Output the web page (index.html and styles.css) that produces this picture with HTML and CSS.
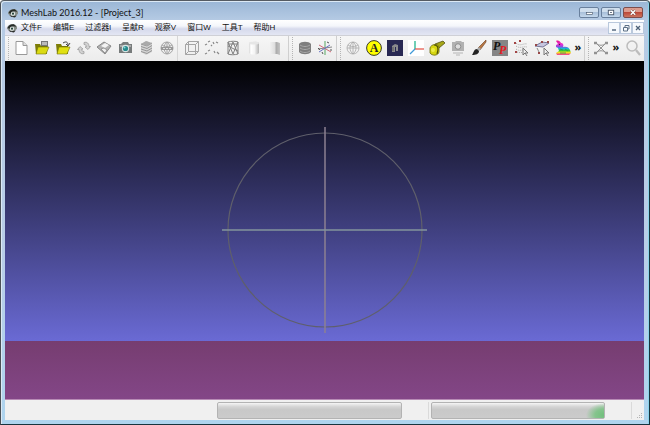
FILE: index.html
```html
<!DOCTYPE html>
<html lang="zh-CN">
<head>
<meta charset="utf-8">
<title>MeshLab 2016.12 - [Project_3]</title>
<link rel="stylesheet" href="styles.css">
</head>
<body>
<svg class="defs" aria-hidden="true">
  <defs>
    <linearGradient id="cylL"><stop offset="0" stop-color="#d8d8d8"/><stop offset=".2" stop-color="#fff"/><stop offset=".55" stop-color="#f4f4f4"/><stop offset="1" stop-color="#b4b4b4"/></linearGradient>
    <linearGradient id="cylR"><stop offset="0" stop-color="#f0f0f0"/><stop offset=".5" stop-color="#ddd"/><stop offset=".6" stop-color="#aaa"/><stop offset="1" stop-color="#c4c4c4"/></linearGradient>
    <linearGradient id="rainbow" x1="0" y1="0" x2="0" y2="1"><stop offset="0" stop-color="#e61c8c"/><stop offset=".25" stop-color="#f02ad0"/><stop offset=".42" stop-color="#8a50e2"/><stop offset=".55" stop-color="#18b6d8"/><stop offset=".7" stop-color="#35c92b"/><stop offset=".82" stop-color="#f5e21a"/><stop offset="1" stop-color="#f0309a"/></linearGradient>
    <symbol id="logo" viewBox="0 0 16 16"><path d="M0 9C0 4 5 1 10 2c4 0 7 4 6 7l-4 4-7 1z" fill="#858b86"/><path d="M1 8c1-4 6-7 10-6l4 4-5-1-6 4z" fill="#252a27"/><circle cx="8" cy="9" r="3.500" fill="#dfe6e2"/><circle cx="8" cy="9" r="1.700" fill="#27423b"/><path d="M2 11l5 2 7-1-3 3-6-1z" fill="#2a2d2a"/></symbol>
    <symbol id="globe" viewBox="0 0 16 16"><circle cx="8" cy="8" r="6"/><path d="M2 8h12M8 2v12M8 2C4 5 4 11 8 14M8 2c4 3 4 9 0 12M3 5c3 2 7 2 10 0"/></symbol>
    <symbol id="stack" viewBox="0 0 16 16"><path d="M3 12l5 3 6-3V4L9 1 3 4z" fill="#d4d4d4"/><path d="M3 4l6 2 5-3M3 6.500l6 2 5-3M3 9l6 2 5-3M3 11.500l6 2 5-3" fill="none" stroke="#959595"/><path d="M3 4l5-3 6 2-5 3z" fill="#aaa"/></symbol>
  </defs>
</svg>
<div class="window">
  <header class="titlebar">
    <svg class="logo"><use href="#logo"/></svg>
    <h1 class="title">MeshLab 2016.12 - [Project_3]</h1>
    <div class="window-buttons">
      <button class="wbtn" aria-label="最小化"><svg viewBox="0 0 20 10"><rect x="7" y="5" width="7" height="2" fill="#fff" stroke="#485669" stroke-width=".7"/></svg></button>
      <button class="wbtn" aria-label="最大化"><svg viewBox="0 0 20 10"><rect x="7" y="2.500" width="6" height="5" fill="#fff" stroke="#485669"/><path d="M9 5h2" stroke="#485669"/></svg></button>
      <button class="wbtn wbtn-close" aria-label="关闭"><svg viewBox="0 0 20 10"><path d="M7.500 2.500l5 5m0-5l-5 5" stroke="#6d3f38" stroke-width="2.600"/><path d="M7.500 2.500l5 5m0-5l-5 5" stroke="#fff" stroke-width="1.600"/></svg></button>
    </div>
  </header>

  <nav class="menubar">
    <svg class="logo"><use href="#logo"/></svg>
    <div class="menus">
      <button>文件F</button><button>编辑E</button><button>过滤器l</button><button>呈献R</button><button>观察V</button><button>窗口W</button><button>工具T</button><button>帮助H</button>
    </div>
    <div class="mdi-buttons">
      <button aria-label="最小化子窗口"><svg viewBox="0 0 10 10"><path d="M3 7h4" stroke="#4d6178" stroke-width="1.400"/></svg></button>
      <button aria-label="还原子窗口"><svg viewBox="0 0 10 10"><path d="M4 4V2.500h4V6H6.500M2.500 4.500h4v3.500h-4z" fill="none" stroke="#5d7086"/></svg></button>
      <button aria-label="关闭子窗口"><svg viewBox="0 0 10 10"><path d="M3 3l4 4m0-4L3 7" stroke="#4d6178" stroke-width="1.300"/></svg></button>
    </div>
  </nav>

  <div class="toolbars">
    <div class="toolbar main-bar">
      <div class="icons eight">
        <button aria-label="新建"><svg viewBox="0 0 16 16"><path d="M3 1.500h7l4 4v9H3z" fill="#fff" stroke="#999"/><path d="M10 1.500v4h4" fill="#ddd" stroke="#999"/></svg></button>
        <button aria-label="打开工程"><svg viewBox="0 0 16 16"><path d="M7 1h7v8H7z" fill="#777"/><path d="M8 2h5v3H8z" fill="#bbb"/><path d="M1 4h5l1 2h6v8H2z" fill="#7d7d06"/><path d="M4 7h11l-3 7H2z" fill="#dada12" stroke="#74740a" stroke-width=".6"/></svg></button>
        <button aria-label="导入网格"><svg viewBox="0 0 16 16"><path d="M1 4h5l1 2h6v8H2z" fill="#7d7d06"/><path d="M4 7h11l-3 7H2z" fill="#e0e012" stroke="#74740a" stroke-width=".6"/><path d="M8 3c3-2 5-1 5 2M11 4l2 2 2-3" fill="none" stroke="#444"/></svg></button>
        <button aria-label="重新载入"><svg viewBox="0 0 16 16"><path d="M8 2.500c3-1 5 1 5 4l1.500 0-2.500 3-3-2.500 1.500-.5c0-1-1-2-2.500-2zM8 13.500c-3 1-5-1-5-4l-1.500 0 2.500-3 3 2.500-1.500.5c0 1 1 2 2.500 2z" fill="#d2d2d2" stroke="#9c9c9c" stroke-width=".8"/></svg></button>
        <button aria-label="导出网格"><svg viewBox="0 0 16 16"><path d="M1 7l7-5 7 4-6 8z" fill="#b1b1b1" stroke="#888"/><path d="M5 6l4-3 4 2-4 3z" fill="#f3f3f3"/><path d="M5 9l3-1 3 2-2 3z" fill="#eee" stroke="#777" stroke-width=".6"/></svg></button>
        <button aria-label="快照"><svg viewBox="0 0 16 16"><path d="M2 4h2l2-2h5l1 2h3v9H2z" fill="#777b7b"/><path d="M3 5h11v2H3z" fill="#aaa"/><circle cx="8.500" cy="8.500" r="3.700" fill="#d8e4e4"/><circle cx="8.500" cy="8.500" r="2.600" fill="#268b8e"/><circle cx="7.500" cy="7.500" r="1" fill="#8ed7d7"/></svg></button>
        <button aria-label="图层"><svg><use href="#stack"/></svg></button>
        <button aria-label="光栅"><svg viewBox="0 0 16 16"><g fill="#eee" stroke="#a5a5a5"><use href="#globe"/></g><path d="M2 7h12v3H2z" fill="#999"/><path d="M4 8.500h8" stroke="#ddd" stroke-dasharray="2 1"/></svg></button>
      </div>
      <div class="icons five">
        <button aria-label="包围盒"><svg viewBox="0 0 16 16"><path d="M1.500 4.500h10v10h-10zM4.500 1.500h10v10h-10zM1.500 4.500l3-3m7 3l3-3m-3 13l3-3m-13 3l3-3" fill="none" stroke="#a5a5a5"/></svg></button>
        <button aria-label="点"><svg viewBox="0 0 16 16"><path d="M1 5l2-1m1-2l2-1m3 1l1 2m2-2l2 1M1 14l2-1m1-2l2-1m4 1l1 2m2-1l2 2M7 5l1 1" stroke="#888" stroke-width="1.200"/></svg></button>
        <button aria-label="线框"><svg viewBox="0 0 16 16"><path d="M3 2c3-1 8-1 10 0v12c-3 1-8 1-10 0zM3 2l5 12 5-12M3 14l5-12 5 12M3 6l10 5M3 4h10" fill="none" stroke="#808080"/></svg></button>
        <button aria-label="平滑着色"><svg viewBox="0 0 16 16"><path d="M3 3c2-2 8-2 10 0v10c-2 2-8 2-10 0z" fill="url(#cylL)"/><ellipse cx="8" cy="3" rx="5" ry="1.500" fill="#e6e6e6"/></svg></button>
        <button aria-label="平面着色"><svg viewBox="0 0 16 16"><path d="M3 2h7l3 1v12l-3-1H3z" fill="url(#cylR)"/></svg></button>
      </div>
    </div>
    <div class="toolbar view-bar">
      <div class="icons two">
        <button aria-label="图层对话框"><svg viewBox="0 0 16 16"><path d="M2 4c2-3 10-3 12 0v8c-2 3-10 3-12 0z" fill="#7e7e7e"/><path d="M3 5c3 2 7 2 10 0M3 8c3 2 7 2 10 0M3 11c3 2 7 2 10 0" fill="none" stroke="#a9a9a9"/></svg></button>
        <button aria-label="坐标轴"><svg viewBox="0 0 16 16" fill="none"><path d="M8 1v14" stroke="#59a765"/><path d="M1 9l14-2" stroke="#888"/><path d="M2 5l12 7" stroke="#d16b78"/><path d="M2 12l11-7" stroke="#6773c4"/><path d="M10 2l2 1m2 6v2M1 8l2 2M5 12l1 2" stroke="#555"/></svg></button>
      </div>
    </div>
    <div class="toolbar edit-bar">
      <div class="icons eleven">
        <button aria-label="轨迹球"><svg fill="none" stroke="#a8a8a8" stroke-width=".8"><use href="#globe"/></svg></button>
        <button aria-label="标注"><svg viewBox="0 0 16 16"><circle cx="8" cy="8" r="7.400" fill="#ffff00" stroke="#222" stroke-width=".9"/><text class="glyph-a" x="8" y="12" text-anchor="middle">A</text></svg></button>
        <button aria-label="对齐"><svg viewBox="0 0 16 16"><path d="M0 0h16v16H0z" fill="#292953"/><path d="M5 6l3-2 3 1v6H9V7H8v5H5z" fill="#8b8b8d"/><path d="M6 7v4" stroke="#555"/></svg></button>
        <button aria-label="参考坐标"><svg viewBox="0 0 16 16"><path d="M0 0h16v16H0z" fill="#fff"/><path d="M7 9V1" stroke="#23b58e" stroke-width="1.300"/><path d="M7 9h9" stroke="#e65c50" stroke-width="1.300"/><path d="M7 9l-5 5" stroke="#3f9ad8" stroke-width="1.300"/></svg></button>
        <button aria-label="测量"><svg viewBox="0 0 16 16"><path d="M6 4l8-3 2 2-6 5z" fill="#a7a719" stroke="#45450b" stroke-width=".7"/><path d="M1 8c1-4 8-5 9-1v5c-1 4-7 4-9 1z" fill="#d6d611" stroke="#67670a" stroke-width=".8"/><path d="M5 5c4 0 5 3 3 9" stroke="#4d4d07" stroke-width="1.200" fill="none"/><circle cx="4" cy="10" r="2" fill="#ecec49"/></svg></button>
        <button aria-label="光栅快照"><svg viewBox="0 0 16 16"><path d="M2 2h3l1-1h5l1 1h2v9H2z" fill="#b1b1b1"/><circle cx="8" cy="6.500" r="2.800" fill="#ddd" stroke="#8e8e8e"/><path d="M3 13h10M6 15h4" stroke="#b5b5b5"/></svg></button>
        <button aria-label="画笔"><svg viewBox="0 0 16 16"><path d="M15 0L7 8l2 2 6-8z" fill="#b97843" stroke="#693e20" stroke-width=".6"/><path d="M8 7L6 9l2 2 2-2z" fill="#aaa"/><path d="M6 9c-3 0-3 3-5 6 4 0 7-1 7-4z" fill="#222"/></svg></button>
        <button aria-label="选取点"><svg viewBox="0 0 16 16"><path d="M0 0h16v16H0z" fill="#858585"/><text class="glyph-p" x="1" y="10">P</text><text class="glyph-p red" x="7" y="14">P</text></svg></button>
        <button aria-label="选择顶点"><svg viewBox="0 0 16 16" fill="none"><path d="M3 3c4 4 7 0 11 1M3 6c4 3 7 0 11 1M3 9c4 3 7 0 9 1M4 12c3 1 5 0 7 1" stroke="#aaa" stroke-dasharray="1 1"/><path d="M1 3h2M6 1h2M2 12h2" stroke="#a34444" stroke-width="2"/><path d="M10 8v7l2-2 2 3M10 8l5 5h-3" fill="#eee" stroke="#777"/></svg></button>
        <button aria-label="选择面"><svg viewBox="0 0 16 16"><path d="M1 6l7-4 7 1-6 4z" fill="#c6c6df" stroke="#777799"/><path d="M1 5h2M7 2h2M13 2h2M4 13h2" stroke="#984848" stroke-width="2"/><path d="M3 8l2 4" stroke="#888"/><path d="M10 8v7l2-2 2 3M10 8l5 5h-3" fill="#eee" stroke="#777"/></svg></button>
        <button aria-label="质量着色"><svg viewBox="0 0 16 16"><path d="M1 1c2-1 4 0 5 2 2 0 3 2 2 4 3-1 6 0 7 3l1 3-2 2H2l-1-2 3-2-1-3-2-1 0-2 2-1z" fill="url(#rainbow)"/><path d="M5 9l3 1m2-1l3 2m-8 2h6" stroke="#2f8b58" stroke-width=".8"/><circle cx="4.500" cy="4.500" r=".7" fill="#333"/></svg></button>
      </div>
      <button class="more" aria-label="更多编辑工具">»</button>
    </div>
    <div class="toolbar cut-bar">
      <div class="icons one">
        <button aria-label="删除选择"><svg viewBox="0 0 16 16" fill="none" stroke="#929292"><path d="M3 3l10 10M14 2L3 13M3 3c3 3 7 3 10 0M3 13c3-3 7-3 10 0"/><path d="M1 3h3M12 3h3M1 13h3M12 13h3" stroke-width="2.400"/></svg></button>
      </div>
      <button class="more" aria-label="更多选择工具">»</button>
    </div>
    <div class="icons search">
      <button aria-label="搜索"><svg viewBox="0 0 16 16" fill="none" stroke="#bcbcbc"><circle cx="7" cy="6" r="5" stroke-width="1.500"/><path d="M11 10l4 5" stroke-width="2.200"/></svg></button>
    </div>
  </div>

  <main class="viewport">
    <div class="scene">
      <svg class="trackball" viewBox="0 0 206 206" fill="none" aria-label="轨迹球">
        <circle cx="103" cy="103" r="97" stroke="#5f5f6b" stroke-width="1.200"/>
        <path d="M103 0v206" stroke="#8d8092" stroke-width="1.500"/>
        <path d="M0 103h205" stroke="#83949c" stroke-width="1.600"/>
      </svg>
    </div>
    <div class="info"></div>
  </main>

  <footer class="statusbar">
    <div class="cell"><progress aria-label="内存" value="0" max="100"></progress></div>
    <div class="cell"><progress class="busy" aria-label="任务进度" value="100" max="100"></progress></div>
    <svg class="grip" viewBox="0 0 6 6"><path d="M4 0h1v1H4zM2 2h1v1H2zM4 2h1v1H4zM0 4h1v1H0zM2 4h1v1H2zM4 4h1v1H4z" fill="#b5b5b5"/></svg>
  </footer>
</div>
</body>
</html>
```

FILE: styles.css
```css
* { box-sizing: border-box; }

body {
  margin: 0;
  font-family: "Open Sans", "Noto Sans CJK SC", sans-serif;
  color: #111;
}

button {
  margin: 0;
  padding: 0;
  border: 0;
  background: none;
  color: inherit;
  font: inherit;
}

.defs { position: absolute; width: 0; height: 0; }

.window {
  display: flex;
  flex-direction: column;
  height: 100vh;
  padding: 0 5px 4px 4px;
  border: 1px solid #17343e;
  border-left-color: #4c5157;
  border-top-color: #555b63;
  border-radius: 4px 4px 0 0;
  background: linear-gradient(#9ab6d6, #b6cbe4 20px, #b9cee8 60%, #aed4ee);
  box-shadow: inset 1px 1px #dce9f5, inset -1px 0 #8bd3ea;
}

.titlebar {
  display: flex;
  align-items: center;
  flex: 0 0 19px;
  padding: 4px 1px 0 3px;
}

.logo { width: 10px; height: 10px; flex: none; }

.title {
  flex: 1;
  margin: 0 0 0 3px;
  font-family: Lato, sans-serif;
  font-size: 9px;
  line-height: 12px;
  font-weight: 400;
}

.window-buttons { display: flex; gap: 2px; }

.wbtn {
  display: flex;
  width: 20px;
  height: 11px;
  border: 1px solid #69809d;
  border-radius: 2px;
  background: linear-gradient(#cfdeed 45%, #a9c0da 50%, #c4d8ec);
}
.wbtn svg { width: 100%; height: 100%; }
.wbtn-close {
  border-color: #7d4d4c;
  background: linear-gradient(#dc9b8d 45%, #bd4938 50%, #cb7560);
}

.menubar {
  display: flex;
  align-items: center;
  flex: 0 0 15px;
  padding-left: 2px;
  background: linear-gradient(#fff, #f4f6fb 40%, #d6daec 60%, #e3e6f3);
}

.menus {
  display: flex;
  flex: 1;
  gap: 11px;
  margin-left: 4px;
  font-family: "Liberation Sans", "Noto Sans CJK SC", sans-serif;
  font-size: 8px;
  line-height: 12px;
}

.mdi-buttons { display: flex; }
.mdi-buttons button {
  display: flex;
  width: 12px;
  height: 12px;
  border: 1px solid #b9c8dc;
  background: #f6f9fd;
}
.mdi-buttons svg { width: 10px; height: 10px; }

.toolbars {
  display: grid;
  grid-template-columns: 284fr 48fr 248fr 37fr 22fr;
  flex: 0 0 26px;
  border-top: 1px solid #cfd0d6;
  background: linear-gradient(#f6f6f6, #ececec);
}

.toolbar {
  display: flex;
  min-width: 0;
  padding: 0 1px 0 6px;
  border-right: 1px solid #cfcfcf;
  background: linear-gradient(#b5b5b5 50%, transparent 50%) 3px 1px / 1px 2px repeat-y;
}
.toolbar.cut-bar { border-right: 0; }

.icons { display: grid; align-items: center; justify-items: center; padding-bottom: 2px; }
.icons button { display: flex; }
.icons svg { width: 16px; height: 16px; }
.eight { flex: 8 1 0; grid-template-columns: repeat(8, 1fr); border-right: 1px solid #d6d6d6; margin-right: 3px; }
.five { flex: 5 1 0; grid-template-columns: repeat(5, 1fr); margin-right: 2px; }
.two { flex: 1; grid-template-columns: repeat(2, 1fr); }
.eleven { flex: 1; grid-template-columns: repeat(11, 1fr); }
.one { flex: 1; }

.more {
  width: 10px;
  padding-bottom: 4px;
  font-size: 11px;
  line-height: 20px;
  font-weight: 700;
}

.glyph-a { font: 700 12px "Liberation Serif", serif; fill: #222; }
.glyph-p { font: italic 700 12px "Liberation Serif", serif; fill: #111; }
.glyph-p.red { fill: #e31b24; }

.viewport {
  display: grid;
  grid-template-rows: minmax(0, 280fr) minmax(0, 59fr);
  flex: 1;
  min-height: 0;
}

.scene {
  display: flex;
  justify-content: center;
  min-height: 0;
  padding: 66px 0 8px;
  background: linear-gradient(#000, #6a6ad4);
}
.trackball { height: 100%; }

.info {
  border-bottom: 1px solid #b78bb5;
  background: linear-gradient(#763d70, #834687);
}

.statusbar {
  display: grid;
  grid-template-columns: 212fr 212fr 203fr 12fr;
  align-items: center;
  flex: 0 0 20px;
  background: #f0f0f0;
}

.cell {
  display: flex;
  padding-right: 26px;
  border-right: 1px solid #dadada;
}
.cell:first-child { grid-column: 2; }
.cell + .cell { padding-left: 2px; }

progress {
  appearance: none;
  width: 100%;
  height: 17px;
  border: 1px solid #b3b3b3;
  border-radius: 2px;
  background: linear-gradient(#f5f5f5, #d4d4d4 25%, #c8c8c8 45%, #cbcbcb);
}
progress::-webkit-progress-bar { background: none; }
progress::-webkit-progress-value { background: none; }
.busy::-webkit-progress-value {
  background: radial-gradient(ellipse 18px 12px at 100% 80%, #70bf7c, #85c48d 50%, transparent);
}

.grip { width: 6px; height: 6px; align-self: end; justify-self: end; margin: 0 1px 1px 0; }
```
